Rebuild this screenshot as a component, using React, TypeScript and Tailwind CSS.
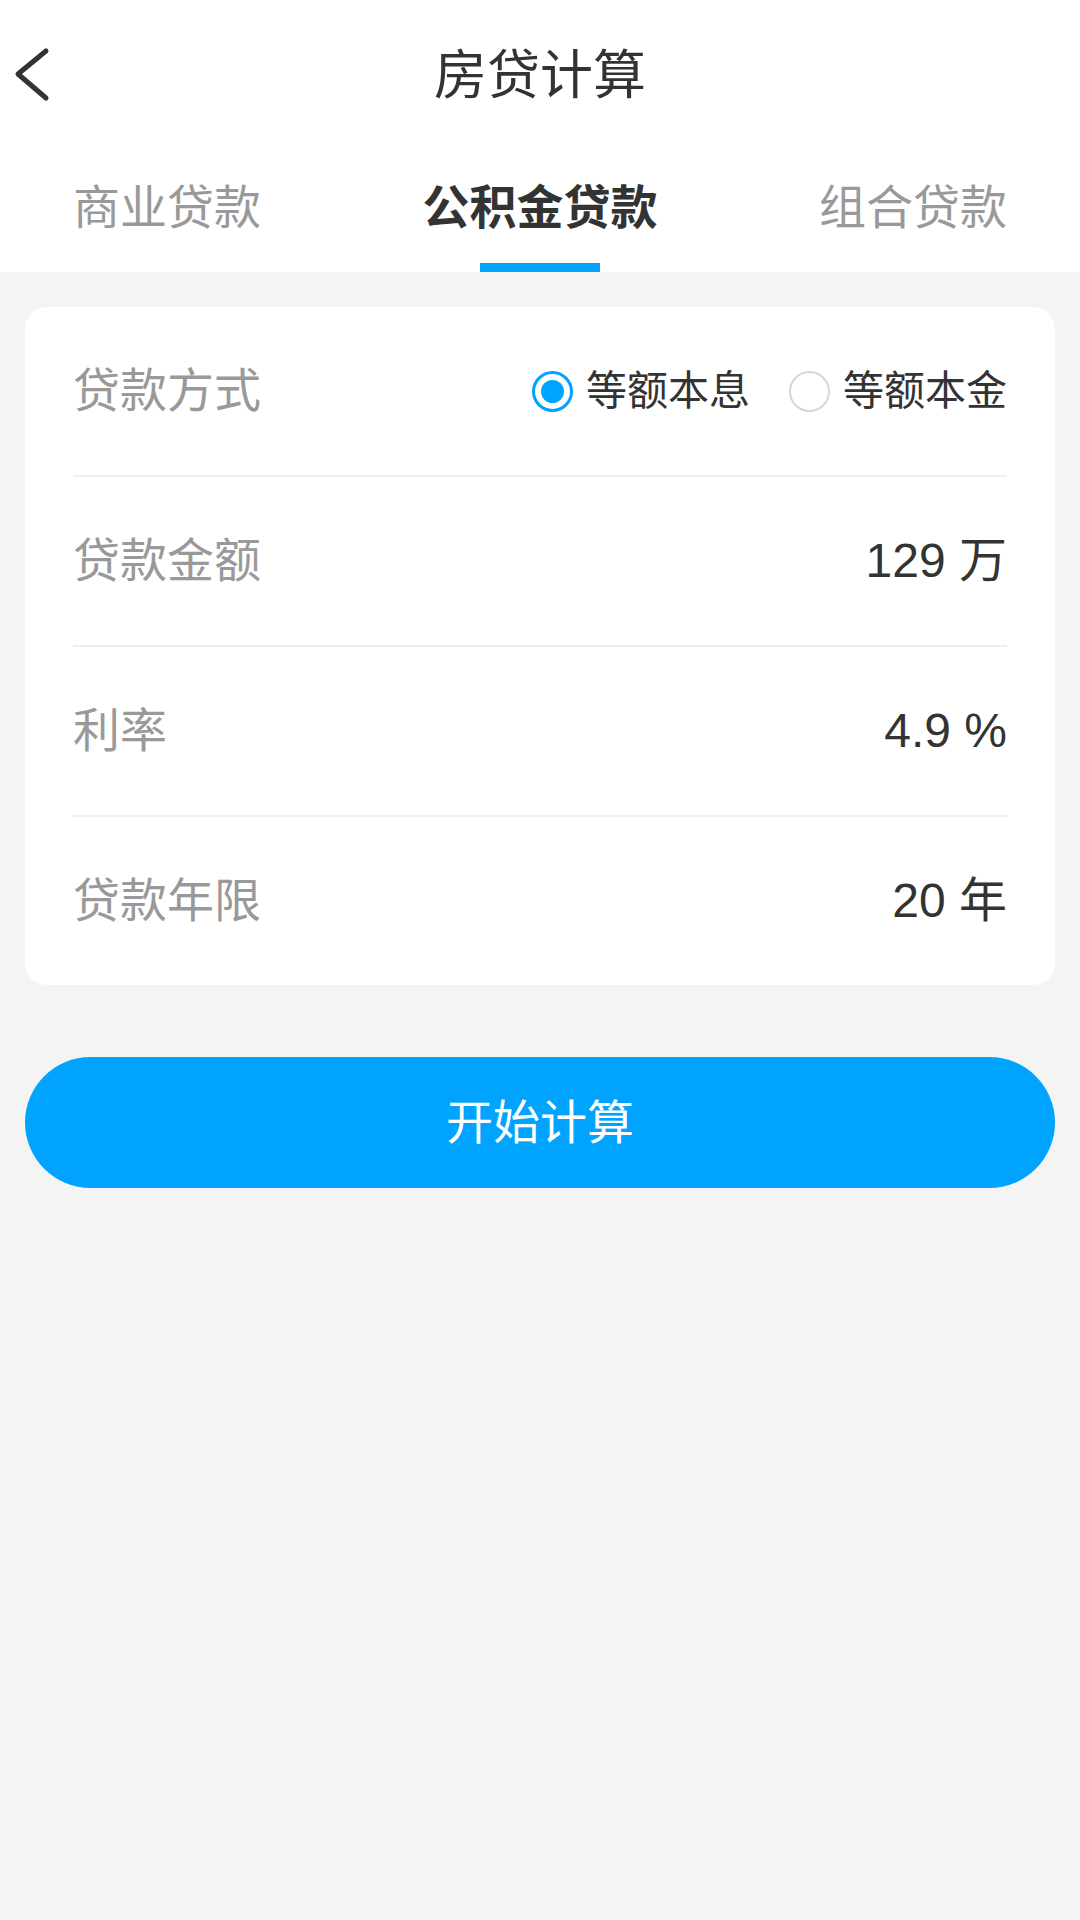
import React, { useState } from "react";

const font = "font-['Liberation_Sans','Noto_Sans_CJK_SC',sans-serif]";

const tabs = ["商业贷款", "公积金贷款", "组合贷款"];

const Radio = ({ checked, label, onClick }: { checked: boolean; label: string; onClick: () => void }) => (
  <div className="flex items-center gap-[13px] cursor-pointer" onClick={onClick}>
    <div
      className={`w-[41px] h-[41px] rounded-full flex items-center justify-center ${
        checked ? "border-[3px] border-[#00a4ff]" : "border-2 border-[#d6d6d6]"
      }`}
    >
      {checked && <div className="w-[23px] h-[23px] rounded-full bg-[#00a4ff]" />}
    </div>
    <span className="text-[41px] leading-[56px] text-[#333]">{label}</span>
  </div>
);

const Row = ({ label, children }: { label: string; children: React.ReactNode }) => (
  <div className="h-[168px] flex items-center justify-between">
    <span className="text-[47px] leading-[60px] text-[#999]">{label}</span>
    {children}
  </div>
);

const Divider = () => <div className="h-[2px] bg-[#eeeeee]" />;

export default function App() {
  const [tab, setTab] = useState(1);
  const [mode, setMode] = useState(0);

  return (
    <div className={`w-[1080px] min-h-[1920px] bg-[#f4f4f4] ${font}`}>
      <div className="bg-white">
        <div className="relative h-[152px] flex items-center justify-center">
          <svg
            className="absolute left-[10px] top-[44px]"
            width="46"
            height="62"
            viewBox="0 0 46 62"
            fill="none"
          >
            <path d="M36 7 L8 30 L36 54" stroke="#333" strokeWidth="5" strokeLinecap="round" strokeLinejoin="round" />
          </svg>
          <h1 className="text-[53px] leading-[64px] text-[#333]">房贷计算</h1>
        </div>
        <div className="h-[120px] flex justify-between px-[73px]">
          {tabs.map((t, i) => (
            <div
              key={t}
              className="flex flex-col items-center justify-between pt-[26px] cursor-pointer"
              onClick={() => setTab(i)}
            >
              <span
                className={`text-[47px] leading-[60px] ${
                  tab === i ? "text-[#333] font-bold" : "text-[#999]"
                }`}
              >
                {t}
              </span>
              <div className={`w-[120px] h-[9px] ${tab === i ? "bg-[#00a4ff]" : "bg-transparent"}`} />
            </div>
          ))}
        </div>
      </div>

      <div className="mx-[25px] mt-[35px] bg-white rounded-[22px] px-[48px]">
        <Row label="贷款方式">
          <div className="flex items-center gap-[39px]">
            <Radio checked={mode === 0} label="等额本息" onClick={() => setMode(0)} />
            <Radio checked={mode === 1} label="等额本金" onClick={() => setMode(1)} />
          </div>
        </Row>
        <Divider />
        <Row label="贷款金额">
          <span className="text-[48px] leading-[60px] text-[#333]">129 万</span>
        </Row>
        <Divider />
        <Row label="利率">
          <span className="text-[48px] leading-[60px] text-[#333]">4.9 %</span>
        </Row>
        <Divider />
        <Row label="贷款年限">
          <span className="text-[48px] leading-[60px] text-[#333]">20 年</span>
        </Row>
      </div>

      <div className="mx-[25px] mt-[72px]">
        <button className="w-full h-[131px] rounded-full bg-[#00a4ff] text-white text-[47px] leading-[60px]">
          开始计算
        </button>
      </div>
    </div>
  );
}
